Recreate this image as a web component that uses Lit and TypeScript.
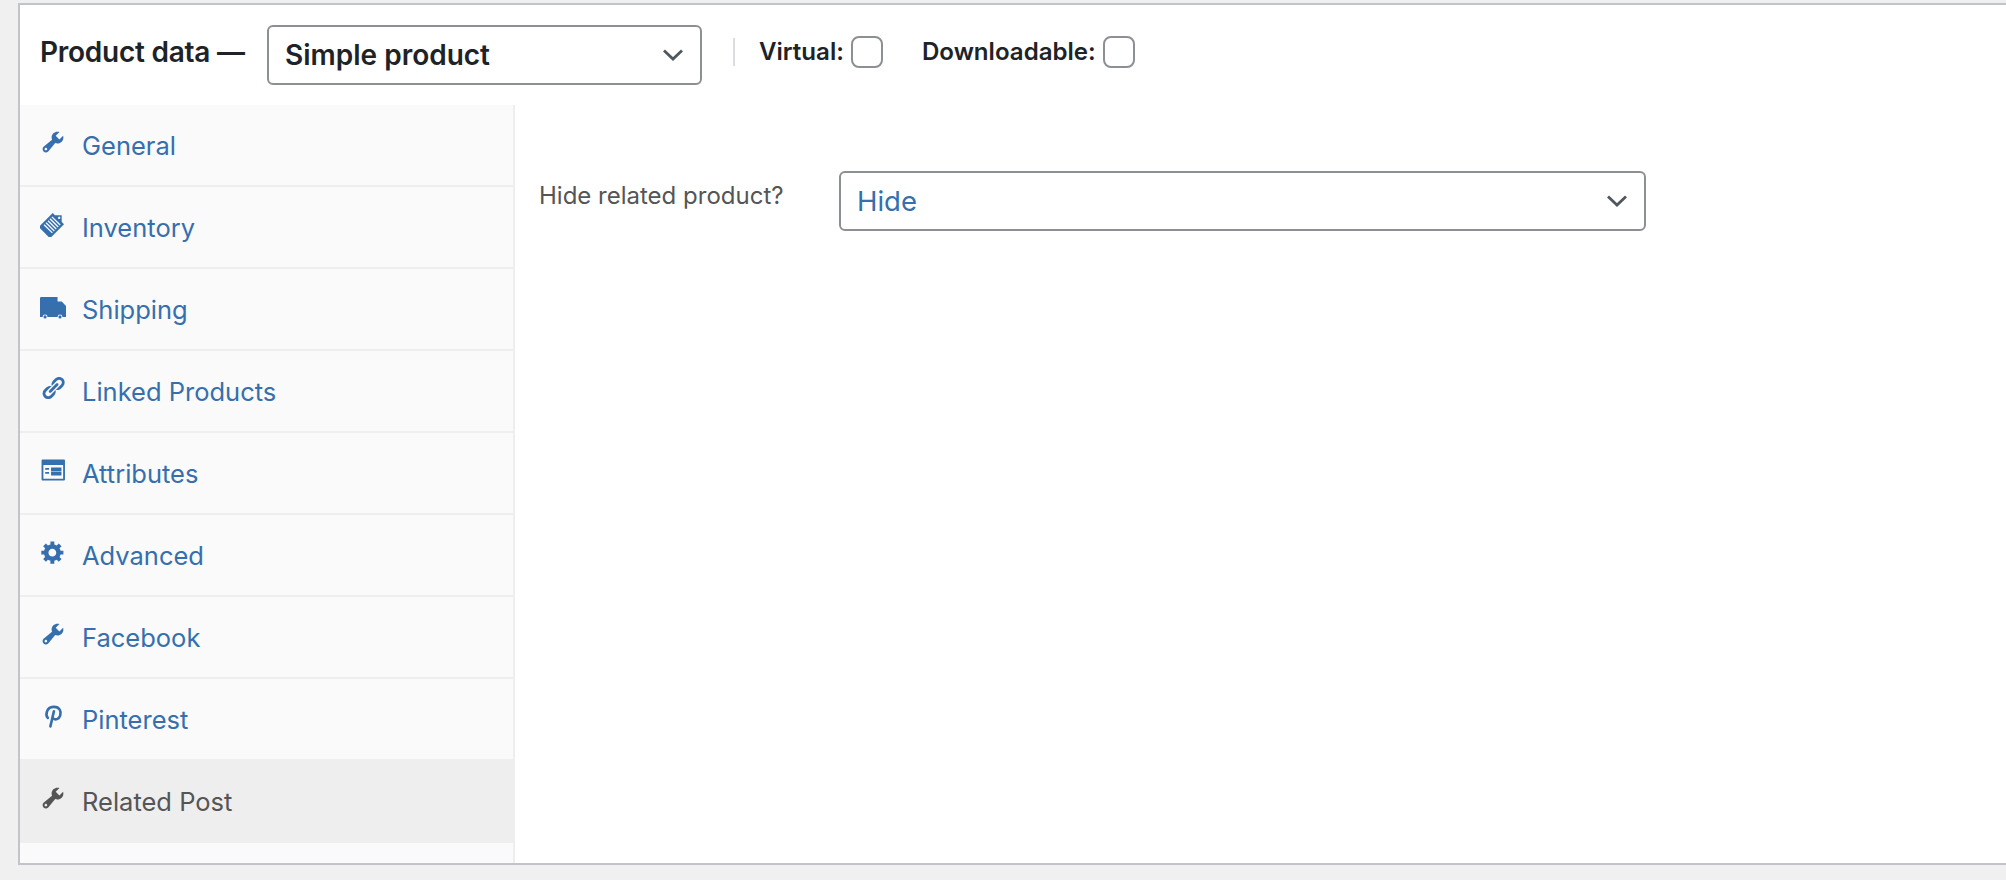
import { LitElement, html, css, svg } from "lit";
import { customElement } from "lit/decorators.js";

const wrench = svg`<path d="M16.68 9.77c-1.34 1.34-3.3 1.67-4.95.99l-5.41 6.52c-.99.99-2.59.99-3.58 0s-.99-2.59 0-3.57l6.52-5.42c-.68-1.65-.35-3.61.99-4.95 1.28-1.28 3.12-1.62 4.72-1.06l-2.89 2.89 2.82 2.82 2.86-2.87c.53 1.58.18 3.39-1.08 4.65zM3.81 16.21c.4.39 1.04.39 1.43 0 .4-.4.4-1.04 0-1.43-.39-.4-1.03-.4-1.43 0-.39.39-.39 1.03 0 1.43z"/>`;
const inventory = svg`<g transform="rotate(45 10 10) translate(10 10) scale(1.12) translate(-10 -10)"><path fill-rule="evenodd" d="M4.500 4.800h2.200L10 1.600l3.300 3.200h2.200v13.600h-11zM10 3.200a.8.8 0 1 0 0 1.600.8.8 0 0 0 0-1.600zM6 6.600v.9h8v-.9zm0 1.900v.9h8v-.9zm0 1.900v.9h8v-.9zm0 1.900v.9h8v-.9zm0 1.900v.9h8v-.9z"/></g>`;
const truck = svg`<path d="M0 4a1 1 0 0 1 1-1h12.500v3.600h3.200L20 10v8.400h-2.700a1.900 1.900 0 0 0-3.800 0H5.800a1.900 1.900 0 0 0-3.800 0H0z"/><circle cx="3.900" cy="18.400" r="1.200"/><circle cx="15.400" cy="18.400" r="1.200"/>`;
const link = svg`<path d="M17.74 2.76c1.68 1.69 1.68 4.41 0 6.1l-1.53 1.52c-1.12 1.12-2.7 1.47-4.14 1.09l2.62-2.61.76-.77.76-.76c.84-.84.84-2.2 0-3.04-.84-.85-2.2-.85-3.04 0l-.77.76-3.38 3.38c-.37-1.44-.02-3.02 1.1-4.14l1.52-1.53c1.69-1.68 4.42-1.68 6.1 0zM8.59 13.43l5.34-5.34c.42-.42.42-1.1 0-1.52-.44-.43-1.13-.39-1.53 0l-5.33 5.34c-.42.42-.42 1.1 0 1.52.44.43 1.13.39 1.52 0zm-.76 2.29l4.14-4.15c.38 1.44.03 3.02-1.09 4.14l-1.52 1.53c-1.69 1.68-4.41 1.68-6.1 0-1.68-1.68-1.68-4.42 0-6.1l1.53-1.52c1.12-1.12 2.7-1.47 4.14-1.1l-4.14 4.15c-.85.84-.85 2.2 0 3.05.84.84 2.2.84 3.04 0z"/>`;
const attributes = svg`<path fill-rule="evenodd" d="M1.200 2.600c0-.4.3-.7.7-.7h16.600c.4 0 .7.3.7.7v14.800c0 .4-.3.7-.7.7H1.900a.7.7 0 0 1-.7-.7zM2.600 6.100v10.600h15.200V6.100zM4 8.500h3v1.300H4zm4.500-.5h8v3h-8zM4 11.500h3v1.300H4zm4.500-.2h8v3h-8z"/>`;
const gear = svg`<path d="M18 12h-2.180c-.17.7-.44 1.350-.81 1.930l1.540 1.540-2.100 2.100-1.540-1.540c-.58.36-1.230.63-1.910.79V19H8v-2.180c-.68-.16-1.330-.43-1.910-.79l-1.540 1.540-2.120-2.120 1.540-1.540c-.36-.58-.63-1.230-.79-1.910H1V9.030h2.170c.16-.7.44-1.350.8-1.940L2.430 5.550l2.100-2.100 1.540 1.540c.58-.37 1.240-.64 1.930-.81V2h3v2.180c.68.16 1.330.43 1.910.79l1.540-1.540 2.120 2.120-1.540 1.540c.36.59.64 1.240.8 1.940H18V12zm-8.500 1.500c1.660 0 3-1.340 3-3s-1.340-3-3-3-3 1.340-3 3 1.340 3 3 3z"/>`;
const pinterest = svg`<path fill="none" stroke="currentColor" stroke-width="2" stroke-linecap="round" d="M6 11.500C4.200 9.500 4.600 3.200 10.300 3c5-.2 6.200 3.600 5.300 6.600-.9 3-3.900 3.800-5.700 2"/><path fill="none" stroke="currentColor" stroke-width="2" stroke-linecap="round" d="M10.700 6.400 8 18"/>`;

const tabs = [
  { label: "General", icon: wrench },
  { label: "Inventory", icon: inventory },
  { label: "Shipping", icon: truck },
  { label: "Linked Products", icon: link },
  { label: "Attributes", icon: attributes },
  { label: "Advanced", icon: gear },
  { label: "Facebook", icon: wrench },
  { label: "Pinterest", icon: pinterest },
  { label: "Related Post", icon: wrench, active: true },
];

const chevron = html`<svg class="chev" viewBox="0 0 22 14" aria-hidden="true"><path d="M2 2.500 11 11 20 2.500" fill="none" stroke="currentColor" stroke-width="2.800"/></svg>`;

@customElement("app-root")
export class AppRoot extends LitElement {
  static styles = css`
    :host {
      display: block;
      background: #f0f0f1;
      height: 880px;
      padding: 3px 0 0 18px;
      box-sizing: border-box;
      font-family: Inter, "Liberation Sans", sans-serif;
      overflow: hidden;
    }
    .panel {
      box-sizing: border-box;
      height: 862px;
      background: #fff;
      border: 2px solid #c3c4c7;
      border-right: 0;
      display: flex;
      flex-direction: column;
    }
    .header {
      height: 100px;
      flex: none;
      display: flex;
      align-items: center;
      padding: 0 0 0 20px;
      box-sizing: border-box;
      color: #1d2327;
    }
    .title {
      font-size: 28px;
      font-weight: 600;
      letter-spacing: -0.25px;
      width: 227px;
      flex: none;
      padding-bottom: 6px;
    }
    .select {
      box-sizing: border-box;
      display: flex;
      align-items: center;
      justify-content: space-between;
      height: 60px;
      border: 2px solid #8c8f94;
      border-radius: 6px;
      background: #fff;
      padding: 0 16px;
    }
    .chev {
      width: 22px;
      height: 14px;
      color: #50575e;
      flex: none;
    }
    .type {
      width: 435px;
      flex: none;
      font-size: 28px;
      font-weight: 600;
    }
    .sep {
      width: 2px;
      height: 28px;
      background: #dcdcde;
      margin: 0 24px 6px 31px;
      flex: none;
    }
    .check {
      display: flex;
      align-items: center;
      gap: 7px;
      font-size: 24.100px;
      font-weight: 600;
      margin-right: 39px;
      padding-bottom: 7px;
    }
    .check input {
      appearance: none;
      margin: 0;
      width: 32px;
      height: 32px;
      box-sizing: border-box;
      border: 2px solid #8c8f94;
      border-radius: 8px;
      background: #fff;
    }
    .body {
      flex: 1;
      display: flex;
      min-height: 0;
    }
    .tabs {
      box-sizing: border-box;
      width: 495px;
      flex: none;
      background: #fafafa;
      border-right: 2px solid #eee;
      list-style: none;
      margin: 0;
      padding: 0;
    }
    .tab {
      box-sizing: border-box;
      height: 82px;
      border-bottom: 2px solid #eee;
      display: flex;
      align-items: center;
      padding: 0 0 0 20px;
      color: #356fae;
      font-size: 25.500px;
    }
    .tab.active {
      background: #eee;
      color: #555;
      margin-right: -2px;
    }
    .tab svg {
      width: 26px;
      height: 26px;
      fill: currentColor;
      flex: none;
      margin: -6px 16px 0 0;
    }
    .content {
      flex: 1;
      min-width: 0;
      padding: 66px 0 0 24px;
      display: flex;
      align-items: flex-start;
    }
    .label {
      width: 300px;
      flex: none;
      font-size: 24px;
      color: #555;
      line-height: 50px;
    }
    .hide {
      width: 807px;
      flex: none;
      font-size: 27.500px;
      color: #356fae;
    }
  `;

  render() {
    return html`
      <div class="panel">
        <div class="header">
          <div class="title">Product data —</div>
          <div class="select type"><span>Simple product</span>${chevron}</div>
          <div class="sep"></div>
          <label class="check">Virtual: <input type="checkbox" /></label>
          <label class="check">Downloadable: <input type="checkbox" /></label>
        </div>
        <div class="body">
          <ul class="tabs">
            ${tabs.map(
              (t) => html`<li class="tab ${t.active ? "active" : ""}">
                <svg viewBox="0 0 20 20" aria-hidden="true">${t.icon}</svg>
                <span>${t.label}</span>
              </li>`
            )}
          </ul>
          <div class="content">
            <div class="label">Hide related product?</div>
            <div class="select hide"><span>Hide</span>${chevron}</div>
          </div>
        </div>
      </div>
    `;
  }
}
